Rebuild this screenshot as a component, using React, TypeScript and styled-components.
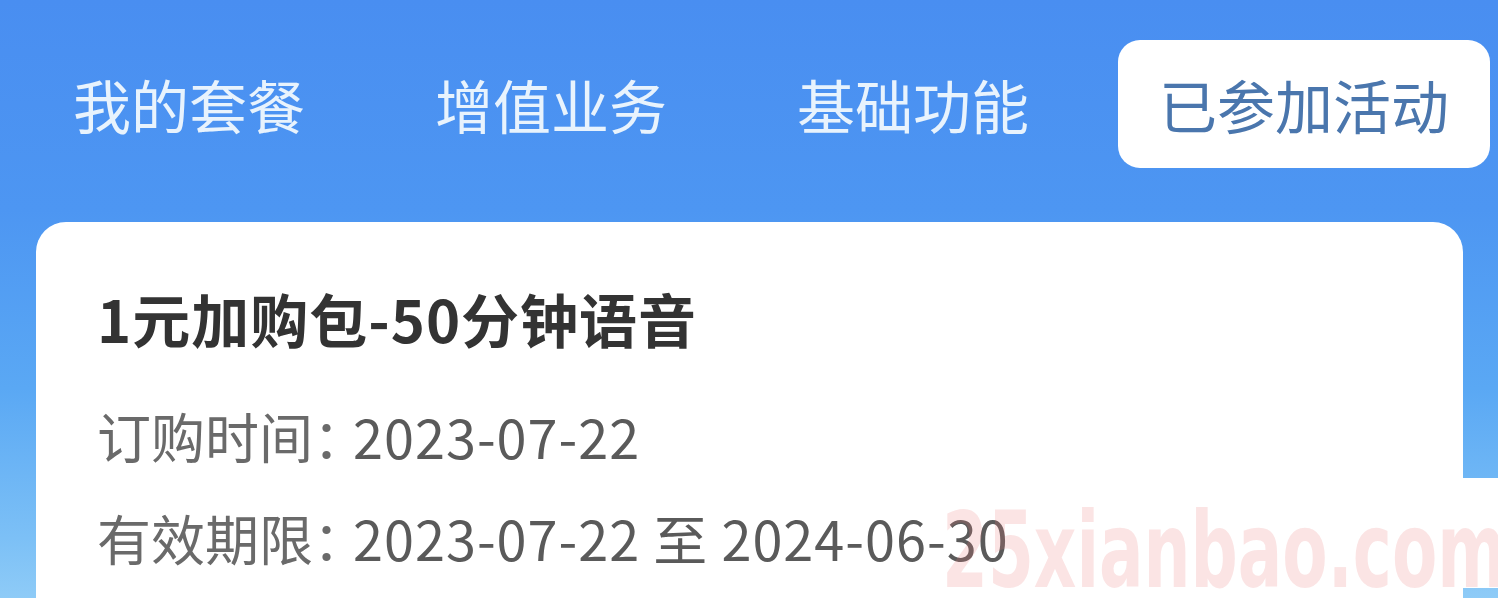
import React from "react";
import styled, { createGlobalStyle } from "styled-components";

const GlobalStyle = createGlobalStyle`
  html, body {
    margin: 0;
    padding: 0;
    height: 100%;
  }
  body {
    font-family: "Noto Sans CJK SC", "Noto Sans", sans-serif;
  }
`;

const Page = styled.div`
  position: relative;
  width: 100%;
  height: 100vh;
  overflow: hidden;

  background:
    linear-gradient(180deg, #ffffff, #ffffff) right 0 top 478px / 36px 110px no-repeat,
    linear-gradient(180deg, #498ef1 0%, #4d96f2 35%, #5aa8f4 65%, #7cc0f6 90%, #8ecbf7 100%);
`;

const TabBar = styled.div`
  display: flex;
  align-items: center;
  gap: 48px;

  padding: 40px 0 0 32px;
`;

const Tab = styled.div<{ $active?: boolean }>`
  height: 128px;
  padding: 0 41px;

  display: flex;
  align-items: center;

  border-radius: 22px;
  background-color: ${(p) => (p.$active ? "#ffffff" : "transparent")};

  color: ${(p) => (p.$active ? "#4a76ad" : "#e8f3fd")};
  font-size: 58px;
  font-weight: 400;
  white-space: nowrap;
`;

const Card = styled.div`
  margin: 54px 35px 0 36px;
  padding: 56px 61px 120px;

  background-color: #ffffff;
  border-radius: 30px;
`;

const Title = styled.div`
  color: #333333;
  font-size: 58px;
  font-weight: 700;
  line-height: 80px;
  letter-spacing: 1px;
  white-space: nowrap;
`;

const InfoList = styled.div`
  margin-top: 26px;

  display: flex;
  flex-direction: column;
`;

const InfoRow = styled.div`
  height: 102px;

  display: flex;
  align-items: center;

  color: #5a5a5a;
  font-size: 54px;
  white-space: nowrap;
`;

const Label = styled.span`
  margin-right: -14px;
  color: #6a6a6a;
`;

const Value = styled.span`
  letter-spacing: 1px;
  white-space: pre;
`;

const Watermark = styled.div`
  position: absolute;
  left: 942px;
  bottom: -6px;

  color: rgba(236, 120, 120, 0.2);
  font-family: "DejaVu Sans", sans-serif;
  font-size: 100px;
  font-weight: 700;
  line-height: 100px;
  white-space: nowrap;
  transform: scale(0.66, 1.05);
  transform-origin: left bottom;
  pointer-events: none;
`;

const tabs = ["我的套餐", "增值业务", "基础功能", "已参加活动"];

export default function App() {
  return (
    <Page>
      <GlobalStyle />
      <TabBar>
        {tabs.map((t, i) => (
          <Tab key={t} $active={i === tabs.length - 1}>
            {t}
          </Tab>
        ))}
      </TabBar>
      <Card>
        <Title>1元加购包-50分钟语音</Title>
        <InfoList>
          <InfoRow>
            <Label>订购时间：</Label>
            <Value>2023-07-22</Value>
          </InfoRow>
          <InfoRow>
            <Label>有效期限：</Label>
            <Value>2023-07-22 至 2024-06-30</Value>
          </InfoRow>
        </InfoList>
      </Card>
      <Watermark>25xianbao.com</Watermark>
    </Page>
  );
}
